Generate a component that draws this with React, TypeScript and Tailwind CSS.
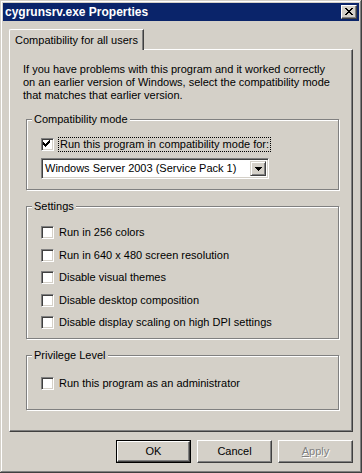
import React from 'react';

const face = 'bg-[#d4d0c8]';

const CheckMark = () => (
  <svg width="13" height="13" viewBox="0 0 13 13" className="absolute -left-[2px] -top-[2px]" shapeRendering="crispEdges">
    <rect x="9" y="3" width="1" height="1" fill="#000" />
    <rect x="8" y="4" width="2" height="1" fill="#000" />
    <rect x="3" y="5" width="1" height="1" fill="#000" />
    <rect x="7" y="5" width="3" height="1" fill="#000" />
    <rect x="3" y="6" width="2" height="1" fill="#000" />
    <rect x="6" y="6" width="3" height="1" fill="#000" />
    <rect x="3" y="7" width="5" height="1" fill="#000" />
    <rect x="4" y="8" width="3" height="1" fill="#000" />
    <rect x="5" y="9" width="1" height="1" fill="#000" />
  </svg>
);

const Checkbox = ({ checked = false }: { checked?: boolean }) => (
  <span className="relative block w-[13px] h-[13px] shrink-0 bg-white border border-t-[#808080] border-l-[#808080] border-r-white border-b-white shadow-[inset_1px_1px_0_#404040,inset_-1px_-1px_0_#d4d0c8]">
    {checked && <CheckMark />}
  </span>
);

const CheckRow = ({ label }: { label: string }) => (
  <div className="flex items-center h-[13px]">
    <Checkbox />
    <span className="ml-[5px] leading-[13px] whitespace-nowrap">{label}</span>
  </div>
);

// etched group box with its caption laid over the top line
const Group = ({ title, className, children }: { title: string; className: string; children: React.ReactNode }) => (
  <div className={`relative ml-[16px] mr-[13px] border border-[#808080] shadow-[inset_1px_1px_0_#fff,1px_1px_0_#fff] pl-[14px] ${className}`}>
    <span className={`absolute left-[5px] -top-[7px] px-[2px] leading-[13px] ${face}`}>{title}</span>
    {children}
  </div>
);

const Button = ({ children, isDefault = false, disabled = false }: { children: React.ReactNode; isDefault?: boolean; disabled?: boolean }) => (
  <div className={`w-[75px] h-[23px] ${isDefault ? 'border border-black' : ''}`}>
    <div
      className={`w-full h-full flex items-center justify-center border border-t-white border-l-white border-r-[#404040] border-b-[#404040] shadow-[inset_-1px_-1px_0_#808080] ${
        disabled ? 'text-[#808080] [text-shadow:1px_1px_0_#fff]' : 'text-black'
      }`}
    >
      {children}
    </div>
  </div>
);

export default function App() {
  return (
    <div
      className={`w-[362px] h-[473px] ${face} p-[3px] flex flex-col text-[11px] text-black font-['Liberation_Sans',Arial,sans-serif] shadow-[inset_-1px_-1px_0_#404040,inset_1px_1px_0_#d4d0c8,inset_-2px_-2px_0_#808080,inset_2px_2px_0_#fff]`}
    >
      {/* title bar */}
      <div className="h-[18px] bg-[#0a246a] flex items-center justify-between pl-[2px] pr-[2px]">
        <span className="text-white font-bold text-[12px] leading-[13px]">cygrunsrv.exe Properties</span>
        <div className={`w-[16px] h-[14px] ${face} flex items-center justify-center border border-t-white border-l-white border-r-[#404040] border-b-[#404040] shadow-[inset_-1px_-1px_0_#808080]`}>
          <svg width="8" height="7" viewBox="0 0 8 7" shapeRendering="crispEdges" className="-mt-px">
            <path d="M0 0h2v1H0zM6 0h2v1H6zM1 1h2v1H1zM5 1h2v1H5zM2 2h4v1H2zM3 3h2v1H3zM2 4h4v1H2zM1 5h2v1H1zM5 5h2v1H5zM0 6h2v1H0zM6 6h2v1H6z" fill="#000" />
          </svg>
        </div>
      </div>

      <div className="px-[6px] pt-[8px] flex flex-col">
        {/* tab */}
        <div className={`relative z-10 -mb-px w-[135px] h-[21px] ${face} rounded-tl-[2px] border-t border-l border-r border-t-white border-l-white border-r-[#404040] shadow-[inset_-1px_0_0_#808080] flex items-center justify-center`}>
          <span className="leading-[13px]">Compatibility for all users</span>
        </div>

        {/* tab page */}
        <div className="h-[383px] border border-t-white border-l-white border-r-[#404040] border-b-[#404040] shadow-[inset_-1px_-1px_0_#808080]">
          <p className="mt-[13px] ml-[13px] leading-[13px]">
            If you have problems with this program and it worked correctly
            <br />
            on an earlier version of Windows, select the compatibility mode
            <br />
            that matches that earlier version.
          </p>

          <Group title="Compatibility mode" className="mt-[17px] pt-[17px] pb-[10px]">
            <div className="flex items-center h-[15px]">
              <Checkbox checked />
              <span className="ml-[4px] px-[1px] leading-[13px] border border-dotted border-black whitespace-nowrap">
                Run this program in compatibility mode for:
              </span>
            </div>
            <div className="mt-[6px] w-[228px] h-[21px] bg-white flex items-center border border-t-[#808080] border-l-[#808080] border-r-white border-b-white shadow-[inset_1px_1px_0_#404040,inset_-1px_-1px_0_#d4d0c8] p-[2px]">
              <span className="flex-1 pl-[1px] leading-[13px] whitespace-nowrap">Windows Server 2003 (Service Pack 1)</span>
              <div className={`w-[16px] h-[15px] ${face} flex items-center justify-center border border-t-[#d4d0c8] border-l-[#d4d0c8] border-r-[#404040] border-b-[#404040] shadow-[inset_1px_1px_0_#fff,inset_-1px_-1px_0_#808080]`}>
                <svg width="7" height="4" viewBox="0 0 7 4" shapeRendering="crispEdges">
                  <path d="M0 0h7v1H0zM1 1h5v1H1zM2 2h3v1H2zM3 3h1v1H3z" fill="#000" />
                </svg>
              </div>
            </div>
          </Group>

          <Group title="Settings" className="mt-[16px] pt-[19px] pb-[9px] flex flex-col gap-[9.5px]">
            <CheckRow label="Run in 256 colors" />
            <CheckRow label="Run in 640 x 480 screen resolution" />
            <CheckRow label="Disable visual themes" />
            <CheckRow label="Disable desktop composition" />
            <CheckRow label="Disable display scaling on high DPI settings" />
          </Group>

          <Group title="Privilege Level" className="mt-[16px] pt-[21px] pb-[19px]">
            <CheckRow label="Run this program as an administrator" />
          </Group>
        </div>

        {/* dialog buttons */}
        <div className="mt-[8px] flex justify-end gap-[6px]">
          <Button isDefault>OK</Button>
          <Button>Cancel</Button>
          <Button disabled>
            <span>
              <span className="underline">A</span>pply
            </span>
          </Button>
        </div>
      </div>
    </div>
  );
}
